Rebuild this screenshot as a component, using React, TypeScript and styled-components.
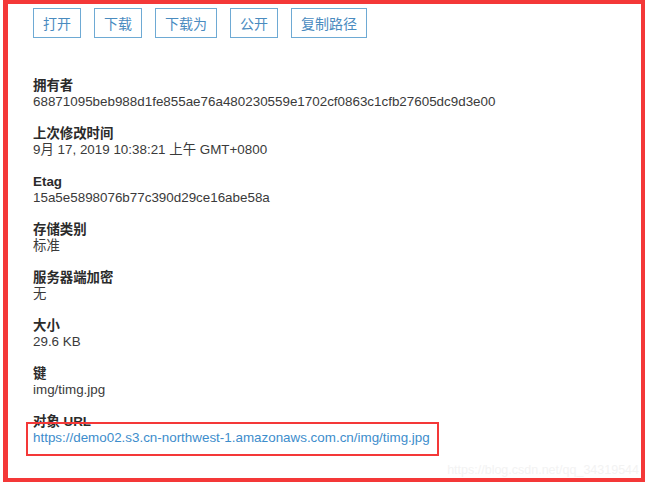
import styled, { createGlobalStyle } from "styled-components";

const GlobalStyle = createGlobalStyle`
  html, body {
    margin: 0;
    padding: 0;
    background: #ffffff;
  }
  body {
    font-family: "Liberation Sans", "Noto Sans CJK SC", sans-serif;
    color: #333333;
  }
`;

const Frame = styled.div`
  position: relative;
  box-sizing: border-box;
  margin-left: 3px;
  width: 642px;
  height: 482px;
  border: 4px solid #f43838;
  border-left-width: 5px;
  padding: 4px 0 0 25px;
`;

const Toolbar = styled.div`
  display: flex;
  gap: 13px;
`;

const ActionButton = styled.button`
  box-sizing: border-box;
  height: 30px;
  padding: 0 9px;
  background: #ffffff;
  border: 1px solid #6eaad4;
  border-radius: 0;
  color: #4a8bbf;
  font-family: "Liberation Sans", "Noto Sans CJK SC", sans-serif;
  font-size: 14px;
  cursor: pointer;
`;

const Details = styled.dl`
  display: flex;
  flex-direction: column;
  gap: 16px;
  margin: 40px 0 0;
`;

const Field = styled.div`
  display: flex;
  flex-direction: column;
  font-size: 13.4px;
  line-height: 16px;
`;

const Label = styled.dt`
  font-weight: 700;
  color: #2b2b2b;
`;

const Value = styled.dd`
  margin: 0;
  color: #3a3a3a;
  white-space: nowrap;
`;

// red annotation box drawn over the url
const Highlight = styled.span`
  position: relative;
  display: inline-block;

  &::after {
    content: "";
    position: absolute;
    left: -7px;
    right: -9px;
    top: -8px;
    bottom: -10px;
    border: 2px solid #f43838;
    pointer-events: none;
  }
`;

const Link = styled.a`
  color: #3d8dcc;
  text-decoration: none;
`;

const Watermark = styled.span`
  position: absolute;
  right: 2px;
  bottom: 1px;
  font-family: "Liberation Sans", sans-serif;
  font-size: 12.5px;
  color: #f3f3f3;
`;

const actions = ["打开", "下载", "下载为", "公开", "复制路径"];

const fields = [
  { label: "拥有者", value: "68871095beb988d1fe855ae76a480230559e1702cf0863c1cfb27605dc9d3e00" },
  { label: "上次修改时间", value: "9月 17, 2019 10:38:21 上午 GMT+0800" },
  { label: "Etag", value: "15a5e5898076b77c390d29ce16abe58a" },
  { label: "存储类别", value: "标准" },
  { label: "服务器端加密", value: "无" },
  { label: "大小", value: "29.6 KB" },
  { label: "键", value: "img/timg.jpg" },
];

const objectUrl = "https://demo02.s3.cn-northwest-1.amazonaws.com.cn/img/timg.jpg";

const App = () => {
  return (
    <>
      <GlobalStyle />
      <Frame>
        <Toolbar>
          {actions.map((item) => (
            <ActionButton key={item}>{item}</ActionButton>
          ))}
        </Toolbar>
        <Details>
          {fields.map((item) => (
            <Field key={item.label}>
              <Label>{item.label}</Label>
              <Value>{item.value}</Value>
            </Field>
          ))}
          <Field>
            <Label>对象 URL</Label>
            <Value>
              <Highlight>
                <Link href="#">{objectUrl}</Link>
              </Highlight>
            </Value>
          </Field>
        </Details>
        <Watermark>https://blog.csdn.net/qq_34319544</Watermark>
      </Frame>
    </>
  );
};

export default App;
